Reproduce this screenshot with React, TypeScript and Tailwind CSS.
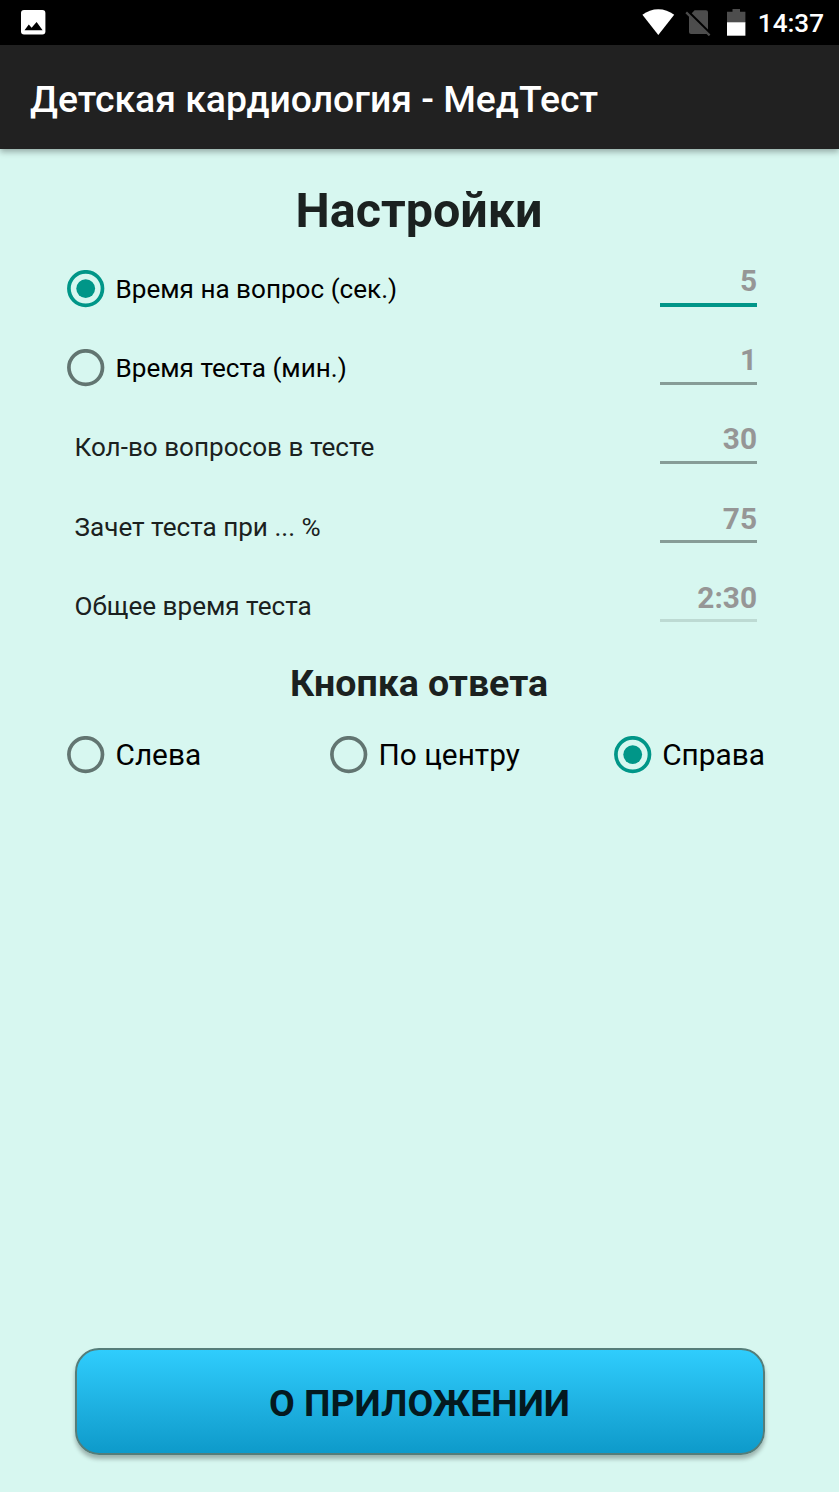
import { useState } from "react";
import clsx from "clsx";

const fields = [
  { label: "Кол-во вопросов в тесте", value: "30", disabled: false },
  { label: "Зачет теста при ... %", value: "75", disabled: false },
  { label: "Общее время теста", value: "2:30", disabled: true },
];

function RadioMark({ checked }: { checked: boolean }) {
  const color = checked ? "#009688" : "#627571";
  return (
    <svg className="h-[38px] w-[38px] shrink-0" viewBox="0 0 38 38" fill="none">
      <circle cx="18.7" cy="18.6" r="16.8" stroke={color} strokeWidth="3.7" />
      {checked && <circle cx="18.7" cy="18.6" r="9.4" fill={color} />}
    </svg>
  );
}

function Radio({
  label,
  checked,
  onSelect,
  className,
}: {
  label: string;
  checked: boolean;
  onSelect: () => void;
  className?: string;
}) {
  return (
    <button
      aria-checked={checked}
      className={clsx("flex items-center gap-[10.5px] whitespace-nowrap text-black", className)}
      onClick={onSelect}
      role="radio"
      type="button"
    >
      <RadioMark checked={checked} />
      <span className="pt-0.5">{label}</span>
    </button>
  );
}

function Value({
  value,
  active,
  disabled,
}: {
  value: string;
  active?: boolean;
  disabled?: boolean;
}) {
  return (
    <div className="flex h-full w-[97px] flex-col pt-[14px]">
      <div className="h-[39px] text-right text-[29.8px] leading-[36px] font-bold text-[#969696]">
        {value}
      </div>
      <div
        className={clsx(
          active && "mt-px h-1 bg-[#009688]",
          !active && "mt-[0.5px] h-[3px]",
          !active && !disabled && "bg-[#879c97]",
          disabled && "bg-[#bddad3]",
        )}
      />
    </div>
  );
}

function StatusBar() {
  return (
    <div className="flex h-[45px] items-center justify-between bg-black pr-[15px] pl-[21px] text-white">
      <svg className="h-[25px] w-[25px]" viewBox="0 0 25 25">
        <rect width="24.4" height="24.4" rx="3" fill="white" />
        <path d="M3.5 20.2L7.8 14.6L10.6 17.8L15.6 12L21.6 20.2Z" fill="black" />
      </svg>
      <div className="flex items-center">
        <svg className="h-[27px] w-[33px]" viewBox="0 0 33 27">
          <path d="M0.4 5.8C9.5 -1.7 23 -1.7 32.2 5.8L16.3 26Z" fill="white" />
        </svg>
        <svg className="ml-[10px] h-[27px] w-[27px]" viewBox="0 0 27 27">
          <path
            d="M9.6 1.2H21Q23 1.2 23 3.2V25H6Q4 25 4 23V7.2Z"
            fill="#4d4d4d"
          />
          <path d="M2.4 2.1L26 25.7" stroke="black" strokeWidth="3" />
          <path d="M1.2 3.4L24.6 26.4" stroke="#4d4d4d" strokeWidth="2.2" />
        </svg>
        <svg className="ml-[15px] h-[27px] w-[19px]" viewBox="0 0 19 27">
          <path d="M5.5 0H13V2.7H18.4V14H0V2.7H5.5Z" fill="#4d4d4d" />
          <path d="M0 13.3H18.4V26.7H0Z" fill="white" />
        </svg>
        <span className="ml-3 pt-px text-[26.1px] leading-8 font-medium">14:37</span>
      </div>
    </div>
  );
}

export default function App() {
  const [timer, setTimer] = useState("question");
  const [side, setSide] = useState("right");

  return (
    <div className="flex h-[1492px] w-[839px] flex-col bg-[#d7f7f0] font-[Roboto,sans-serif] text-[#1b2120]">
      <StatusBar />
      <header className="flex h-[104px] items-center bg-[#212121] pl-[30px] shadow-[0_3px_6px_rgba(0,0,0,0.3)]">
        <h1 className="pt-1 text-[37.35px] font-medium text-white">
          Детская кардиология - МедТест
        </h1>
      </header>

      <main className="flex grow flex-col px-[75px] pt-[33px]">
        <h2 className="-ml-px h-[67px] text-center text-[48.5px] leading-[58px] font-bold">
          Настройки
        </h2>

        <div className="-ml-2 pr-[7px] text-[26.1px]" role="radiogroup">
          <div className="flex h-[79.2px] items-center justify-between">
            <Radio
              checked={timer === "question"}
              label="Время на вопрос (сек.)"
              onSelect={() => setTimer("question")}
            />
            <Value active value="5" />
          </div>
          <div className="flex h-[79.2px] items-center justify-between">
            <Radio
              checked={timer === "test"}
              label="Время теста (мин.)"
              onSelect={() => setTimer("test")}
            />
            <Value value="1" />
          </div>
        </div>

        {fields.map((field) => (
          <div
            className="flex h-[79.2px] shrink-0 items-center justify-between pr-[7px] text-[26.1px]"
            key={field.label}
          >
            <span className="-ml-[0.5px] pt-0.5">{field.label}</span>
            <Value disabled={field.disabled} value={field.value} />
          </div>
        ))}

        <h3 className="mt-4 -ml-px text-center text-[37.5px] leading-[44px] font-bold">
          Кнопка ответа
        </h3>
        <div
          className="-mr-px -ml-2 mt-[26.5px] flex items-center justify-between text-[29.8px]"
          role="radiogroup"
        >
          <Radio checked={side === "left"} label="Слева" onSelect={() => setSide("left")} />
          <Radio
            checked={side === "center"}
            className="ml-[35px]"
            label="По центру"
            onSelect={() => setSide("center")}
          />
          <Radio checked={side === "right"} label="Справа" onSelect={() => setSide("right")} />
        </div>

        <button
          className="-mx-[0.5px] mt-auto mb-[37px] h-[107px] rounded-[24px] border-2 border-[#557d79] bg-linear-to-b from-[#2fcdfd] to-[#0d9aca] pt-1 text-[37.4px] font-bold text-[#04191f] shadow-[0_4px_4px_rgba(0,0,0,0.28)]"
          type="button"
        >
          О ПРИЛОЖЕНИИ
        </button>
      </main>
    </div>
  );
}
